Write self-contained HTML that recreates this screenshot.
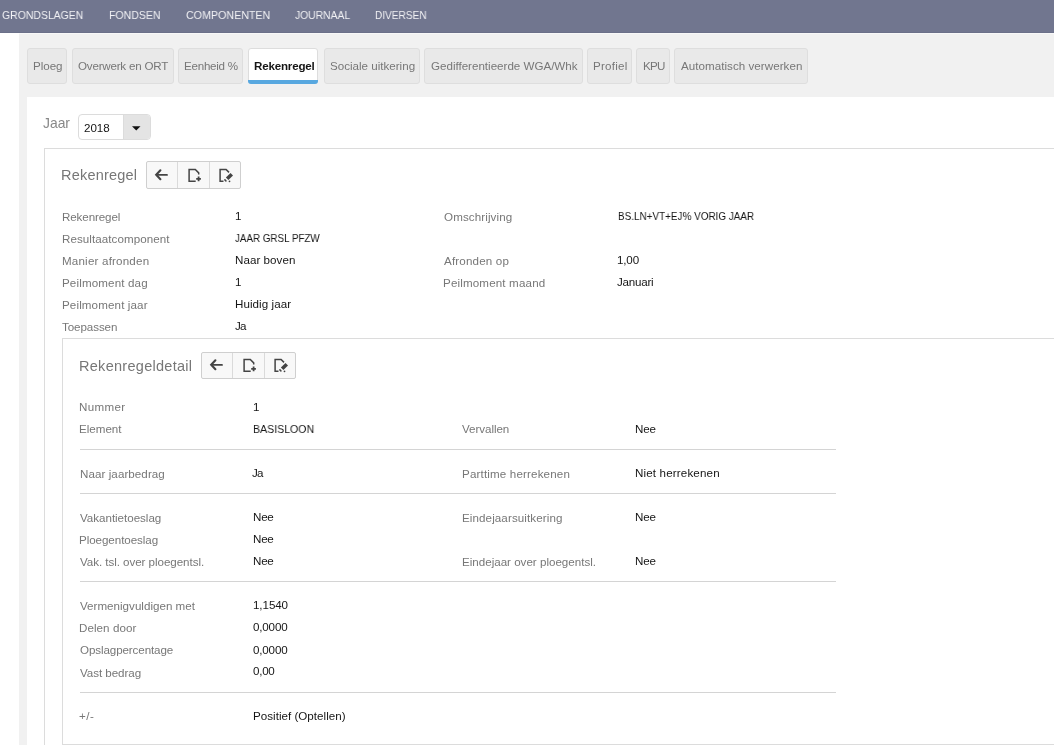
<!DOCTYPE html>
<html><head><meta charset="utf-8">
<style>
html,body{margin:0;padding:0;width:1054px;height:745px;overflow:hidden;background:#fff;font-family:"Liberation Sans",sans-serif;}
.a{position:absolute;box-sizing:border-box;}
.t{position:absolute;white-space:pre;line-height:normal;font-family:"Liberation Sans",sans-serif;will-change:transform;}
.tab{position:absolute;box-sizing:border-box;top:48px;height:36px;background:#e9e9e9;border:1px solid #dedede;border-radius:3px;}
.bg{position:absolute;box-sizing:border-box;height:27px;width:95px;background:#f8f8f8;border:1px solid #cfcfcf;border-radius:2px;}
.sep{position:absolute;top:0;bottom:0;width:1px;background:#dadada;}
.hl{position:absolute;height:1px;left:80px;width:756px;background:#d4d4d4;}
</style></head><body>
<!-- navbar -->
<div class="a" style="left:0;top:0;width:1054px;height:33px;background:#71768f;"></div>
<div class="a" style="left:0;top:32px;width:1054px;height:1px;background:#6b7089;"></div>
<!-- gray area -->
<div class="a" style="left:19px;top:33px;width:1035px;height:712px;background:#f1f1f1;"></div>
<div class="a" style="left:19px;top:33px;width:1035px;height:1px;background:#f8f8f8;"></div>
<!-- tabs -->
<div class="tab" style="left:27px;width:40px;"></div>
<div class="tab" style="left:72px;width:102px;"></div>
<div class="tab" style="left:178px;width:65px;"></div>
<div class="tab" style="left:248px;width:70px;background:#fff;border-color:#dddddd;"></div>
<div class="a" style="left:248px;top:80px;width:70px;height:4px;background:#58a8e0;border-radius:0 0 3px 3px;"></div>
<div class="tab" style="left:324px;width:96px;"></div>
<div class="tab" style="left:424px;width:159px;"></div>
<div class="tab" style="left:587px;width:45px;"></div>
<div class="tab" style="left:636px;width:34px;"></div>
<div class="tab" style="left:674px;width:134px;"></div>
<!-- white panel -->
<div class="a" style="left:27px;top:97px;width:1027px;height:648px;background:#fff;"></div>
<!-- select -->
<div class="a" style="left:78px;top:114px;width:73px;height:26px;border:1px solid #dcdcdc;border-radius:4px;background:#fff;overflow:hidden;">
  <div class="a" style="left:44px;top:0;width:28px;height:24px;background:#e4e4e4;border-left:1px solid #dcdcdc;"></div>
</div>
<svg class="a" style="left:0;top:0" width="1054" height="745" viewBox="0 0 1054 745">
  <polygon points="132,126.3 140.5,126.3 136.25,130.6" fill="#111"/>
</svg>
<!-- outer panel -->
<div class="a" style="left:44px;top:148px;width:1020px;height:700px;border:1px solid #dcdcdc;"></div>
<!-- button group 1 -->
<div class="bg" style="left:146px;top:161px;height:28px;">
  <div class="sep" style="left:30px"></div><div class="sep" style="left:62px"></div>
</div>
<!-- inner panel -->
<div class="a" style="left:62px;top:338px;width:1010px;height:407px;border:1px solid #dcdcdc;"></div>
<!-- button group 2 -->
<div class="bg" style="left:201px;top:352px;">
  <div class="sep" style="left:30px"></div><div class="sep" style="left:62px"></div>
</div>
<!-- lines -->
<div class="hl" style="top:449px"></div>
<div class="hl" style="top:493px"></div>
<div class="hl" style="top:581px"></div>
<div class="hl" style="top:692px"></div>
<!-- icons -->
<svg class="a" style="left:0;top:0" width="1054" height="745" viewBox="0 0 1054 745" fill="none" stroke="#444" stroke-width="2">
  <g id="ic1">
    <path d="M167 174.9 H157" stroke-width="1.8" stroke-linecap="round"/>
    <path d="M160.4 170.3 L156.2 174.75 L160.4 179.2" stroke-width="2.1" stroke-linecap="round" stroke-linejoin="miter"/>
    <path d="M198.7 174.6 V172.9 L195.3 169.5 H189.1 V181.2 H195.7" stroke-width="1.5" stroke-linejoin="miter"/>
    <path d="M196.2 178.8 H200.9 M198.6 176.5 V181.3" stroke-width="1.8"/>
    <path d="M229 172.4 L226.1 169.5 H220.1 V181.2 H223.5" stroke-width="1.5" stroke-linejoin="miter"/>
    <polygon points="225.9,177.6 230.5,173.0 233.0,175.5 228.4,180.1" fill="#444" stroke="none"/>
    <path d="M224.9 179.9 L225.9 180.9" stroke-width="1.5" stroke-linecap="round"/>
    <circle cx="229.5" cy="181.3" r="0.9" fill="#444" stroke="none"/>
  </g>
  <use href="#ic1" x="55" y="190"/>
</svg>
<div class=t style='left:2px;top:8px;font-size:11.60px;letter-spacing:0.000px;transform:scaleX(0.9013);transform-origin:0 0;color:#f2f2f5;'>GRONDSLAGEN</div>
<div class=t style='left:109px;top:8px;font-size:11.60px;letter-spacing:0.000px;transform:scaleX(0.9109);transform-origin:0 0;color:#f2f2f5;'>FONDSEN</div>
<div class=t style='left:186px;top:8px;font-size:11.60px;letter-spacing:0.000px;transform:scaleX(0.9218);transform-origin:0 0;color:#f2f2f5;'>COMPONENTEN</div>
<div class=t style='left:295px;top:8px;font-size:11.60px;letter-spacing:0.000px;transform:scaleX(0.8901);transform-origin:0 0;color:#f2f2f5;'>JOURNAAL</div>
<div class=t style='left:375px;top:8px;font-size:11.60px;letter-spacing:0.000px;transform:scaleX(0.8699);transform-origin:0 0;color:#f2f2f5;'>DIVERSEN</div>
<div class=t style='left:33px;top:59px;font-size:11.60px;letter-spacing:-0.033px;color:#777777;'>Ploeg</div>
<div class=t style='left:78px;top:59px;font-size:11.60px;letter-spacing:-0.206px;color:#777777;'>Overwerk en ORT</div>
<div class=t style='left:184px;top:59px;font-size:11.60px;letter-spacing:-0.248px;color:#777777;'>Eenheid %</div>
<div class=t style='left:254px;top:59px;font-size:11.60px;letter-spacing:-0.189px;color:#151515;font-weight:700;'>Rekenregel</div>
<div class=t style='left:330px;top:59px;font-size:11.60px;letter-spacing:0.001px;color:#777777;'>Sociale uitkering</div>
<div class=t style='left:431px;top:59px;font-size:11.60px;letter-spacing:-0.007px;color:#777777;'>Gedifferentieerde WGA/Whk</div>
<div class=t style='left:593px;top:59px;font-size:11.60px;letter-spacing:0.228px;color:#777777;'>Profiel</div>
<div class=t style='left:643px;top:59px;font-size:11.60px;letter-spacing:-0.764px;color:#777777;'>KPU</div>
<div class=t style='left:681px;top:59px;font-size:11.60px;letter-spacing:0.042px;color:#777777;'>Automatisch verwerken</div>
<div class=t style='left:43px;top:115px;font-size:13.90px;letter-spacing:-0.017px;color:#888888;'>Jaar</div>
<div class=t style='left:84px;top:121px;font-size:11.60px;letter-spacing:-0.016px;color:#151515;'>2018</div>
<div class=t style='left:61px;top:167px;font-size:14.50px;letter-spacing:0.212px;color:#777777;'>Rekenregel</div>
<div class=t style='left:62px;top:210px;font-size:11.60px;letter-spacing:-0.108px;color:#777777;'>Rekenregel</div>
<div class=t style='left:62px;top:232px;font-size:11.60px;letter-spacing:0.062px;color:#777777;'>Resultaatcomponent</div>
<div class=t style='left:62px;top:254px;font-size:11.60px;letter-spacing:0.190px;color:#777777;'>Manier afronden</div>
<div class=t style='left:62px;top:276px;font-size:11.60px;letter-spacing:0.140px;color:#777777;'>Peilmoment dag</div>
<div class=t style='left:62px;top:298px;font-size:11.60px;letter-spacing:0.126px;color:#777777;'>Peilmoment jaar</div>
<div class=t style='left:62px;top:320px;font-size:11.60px;letter-spacing:-0.083px;color:#777777;'>Toepassen</div>
<div class=t style='left:444px;top:210px;font-size:11.60px;letter-spacing:0.109px;color:#777777;'>Omschrijving</div>
<div class=t style='left:444px;top:254px;font-size:11.60px;letter-spacing:0.167px;color:#777777;'>Afronden op</div>
<div class=t style='left:443px;top:276px;font-size:11.60px;letter-spacing:0.153px;color:#777777;'>Peilmoment maand</div>
<div class=t style='left:235px;top:209px;font-size:11.60px;letter-spacing:0.000px;color:#151515;'>1</div>
<div class=t style='left:235px;top:231px;font-size:11.60px;letter-spacing:0.000px;transform:scaleX(0.8468);transform-origin:0 0;color:#151515;'>JAAR GRSL PFZW</div>
<div class=t style='left:235px;top:253px;font-size:11.60px;letter-spacing:0.052px;color:#151515;'>Naar boven</div>
<div class=t style='left:235px;top:275px;font-size:11.60px;letter-spacing:0.000px;color:#151515;'>1</div>
<div class=t style='left:235px;top:297px;font-size:11.60px;letter-spacing:0.063px;color:#151515;'>Huidig jaar</div>
<div class=t style='left:235px;top:319px;font-size:11.60px;letter-spacing:-0.800px;color:#151515;'>Ja</div>
<div class=t style='left:618px;top:209px;font-size:11.60px;letter-spacing:0.000px;transform:scaleX(0.8555);transform-origin:0 0;color:#151515;'>BS.LN+VT+EJ% VORIG JAAR</div>
<div class=t style='left:617px;top:253px;font-size:11.60px;letter-spacing:-0.163px;color:#151515;'>1,00</div>
<div class=t style='left:617px;top:275px;font-size:11.60px;letter-spacing:-0.232px;color:#151515;'>Januari</div>
<div class=t style='left:79px;top:358px;font-size:14.50px;letter-spacing:0.283px;color:#777777;'>Rekenregeldetail</div>
<div class=t style='left:79px;top:400px;font-size:11.60px;letter-spacing:0.322px;color:#777777;'>Nummer</div>
<div class=t style='left:79px;top:422px;font-size:11.60px;letter-spacing:0.001px;color:#777777;'>Element</div>
<div class=t style='left:80px;top:467px;font-size:11.60px;letter-spacing:0.072px;color:#777777;'>Naar jaarbedrag</div>
<div class=t style='left:80px;top:511px;font-size:11.60px;letter-spacing:-0.027px;color:#777777;'>Vakantietoeslag</div>
<div class=t style='left:79px;top:533px;font-size:11.60px;letter-spacing:-0.057px;color:#777777;'>Ploegentoeslag</div>
<div class=t style='left:80px;top:555px;font-size:11.60px;letter-spacing:-0.052px;color:#777777;'>Vak. tsl. over ploegentsl.</div>
<div class=t style='left:80px;top:599px;font-size:11.60px;letter-spacing:0.013px;color:#777777;'>Vermenigvuldigen met</div>
<div class=t style='left:79px;top:621px;font-size:11.60px;letter-spacing:0.070px;color:#777777;'>Delen door</div>
<div class=t style='left:80px;top:643px;font-size:11.60px;letter-spacing:-0.100px;color:#777777;'>Opslagpercentage</div>
<div class=t style='left:80px;top:666px;font-size:11.60px;letter-spacing:-0.058px;color:#777777;'>Vast bedrag</div>
<div class=t style='left:79px;top:709px;font-size:11.60px;letter-spacing:0.480px;color:#777777;'>+/-</div>
<div class=t style='left:462px;top:422px;font-size:11.60px;letter-spacing:-0.051px;color:#777777;'>Vervallen</div>
<div class=t style='left:462px;top:467px;font-size:11.60px;letter-spacing:0.158px;color:#777777;'>Parttime herrekenen</div>
<div class=t style='left:462px;top:511px;font-size:11.60px;letter-spacing:0.099px;color:#777777;'>Eindejaarsuitkering</div>
<div class=t style='left:462px;top:555px;font-size:11.60px;letter-spacing:-0.003px;color:#777777;'>Eindejaar over ploegentsl.</div>
<div class=t style='left:253px;top:400px;font-size:11.60px;letter-spacing:0.000px;color:#151515;'>1</div>
<div class=t style='left:253px;top:422px;font-size:11.60px;letter-spacing:0.000px;transform:scaleX(0.9123);transform-origin:0 0;color:#151515;'>BASISLOON</div>
<div class=t style='left:252px;top:466px;font-size:11.60px;letter-spacing:-0.800px;color:#151515;'>Ja</div>
<div class=t style='left:253px;top:510px;font-size:11.60px;letter-spacing:-0.237px;color:#151515;'>Nee</div>
<div class=t style='left:253px;top:532px;font-size:11.60px;letter-spacing:-0.237px;color:#151515;'>Nee</div>
<div class=t style='left:253px;top:554px;font-size:11.60px;letter-spacing:-0.237px;color:#151515;'>Nee</div>
<div class=t style='left:253px;top:598px;font-size:11.60px;letter-spacing:-0.078px;color:#151515;'>1,1540</div>
<div class=t style='left:253px;top:620px;font-size:11.60px;letter-spacing:-0.171px;color:#151515;'>0,0000</div>
<div class=t style='left:253px;top:643px;font-size:11.60px;letter-spacing:-0.171px;color:#151515;'>0,0000</div>
<div class=t style='left:253px;top:664px;font-size:11.60px;letter-spacing:-0.251px;color:#151515;'>0,00</div>
<div class=t style='left:253px;top:709px;font-size:11.60px;letter-spacing:0.023px;color:#151515;'>Positief (Optellen)</div>
<div class=t style='left:635px;top:422px;font-size:11.60px;letter-spacing:-0.137px;color:#151515;'>Nee</div>
<div class=t style='left:635px;top:466px;font-size:11.60px;letter-spacing:0.150px;color:#151515;'>Niet herrekenen</div>
<div class=t style='left:635px;top:510px;font-size:11.60px;letter-spacing:-0.137px;color:#151515;'>Nee</div>
<div class=t style='left:635px;top:554px;font-size:11.60px;letter-spacing:-0.137px;color:#151515;'>Nee</div>
</body></html>
